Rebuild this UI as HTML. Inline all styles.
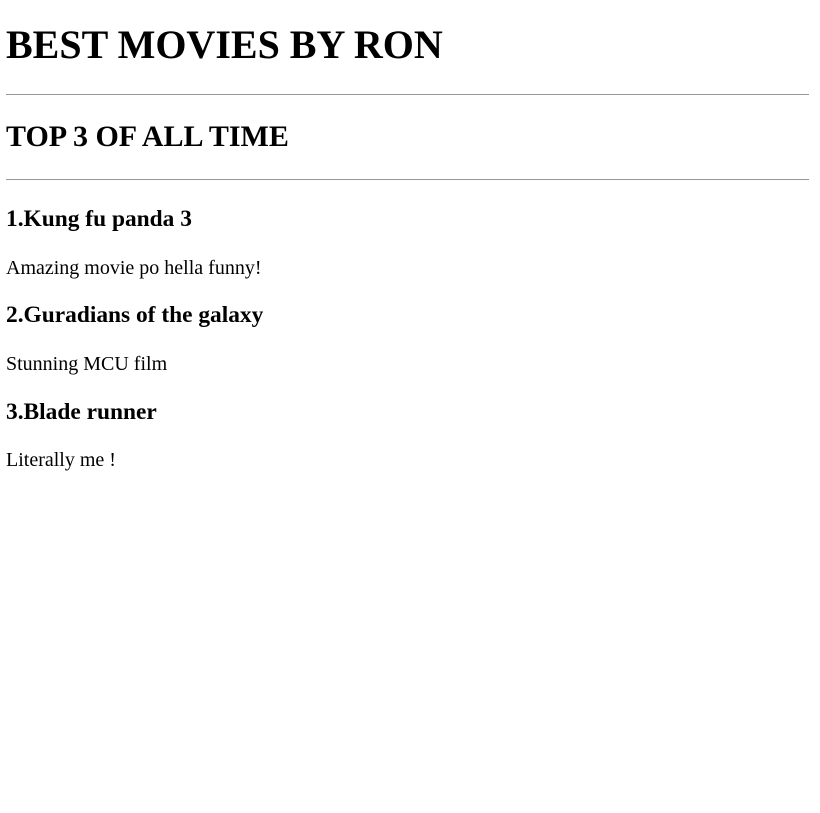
<!DOCTYPE html>
<html><head><style>
body{margin:0 11px 0 6px;font-family:"Liberation Serif",serif;color:#000;background:#fff}
h1,h2,h3,p,hr{margin-bottom:0}
h1{font-size:40px;margin-top:22px;line-height:46px}
h2{font-size:30px;margin-top:25px;line-height:34px}
h3{font-size:23.4px;margin-top:22.8px;line-height:27px}
p{font-size:20px;margin-top:23.6px;line-height:23px}
hr{border:0;border-top:1px solid #999;height:0}
hr.a{margin-top:26px}
hr.b{margin-top:24.5px}
h3.f{margin-top:26.5px}
</style></head><body>
<h1>BEST MOVIES BY RON</h1>
<hr class="a">
<h2>TOP 3 OF ALL TIME</h2>
<hr class="b">
<h3 class="f">1.Kung fu panda 3</h3>
<p>Amazing movie po hella funny!</p>
<h3>2.Guradians of the galaxy</h3>
<p>Stunning MCU film</p>
<h3>3.Blade runner</h3>
<p>Literally me !</p>
</body></html>
